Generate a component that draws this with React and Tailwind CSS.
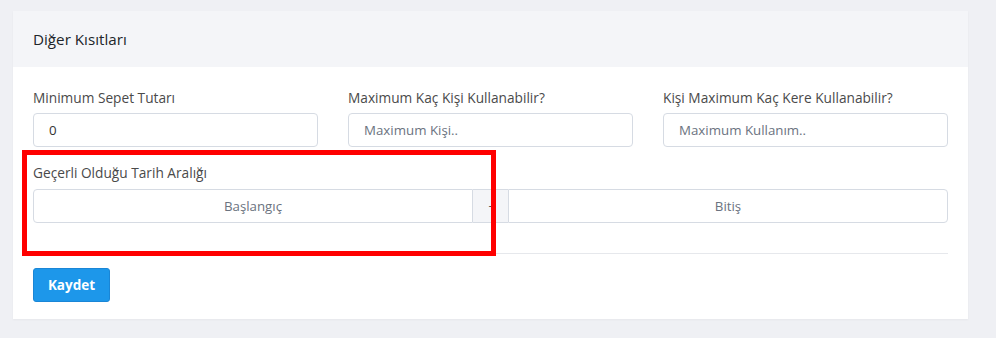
export default function App() {
  const font = { fontFamily: '"Open Sans", "Noto Sans", sans-serif' };
  return (
    <div className="min-h-[338px] bg-[#eff0f4] pl-[13px] pr-[28px] pt-[11px] pb-[19px]" style={font}>
      <div className="bg-white shadow-[0_1px_2px_rgba(0,0,0,0.04)]">
        <div className="flex h-[56px] items-center bg-[#f4f5f8] px-[20px]">
          <h2 className="text-[15.2px] text-[#212529]">Diğer Kısıtları</h2>
        </div>
        <div className="px-[20px] pt-[21px] pb-[17px]">
          <div className="grid grid-cols-3 gap-[30px]">
            <div>
              <label className="block text-[13.7px] leading-[20px] text-[#4a4a4a]">Minimum Sepet Tutarı</label>
              <input
                className="mt-[5px] h-[34px] w-full rounded-[4px] border border-[#d6dbe3] px-[15px] text-[13.3px] text-[#333] outline-none"
                defaultValue="0"
              />
            </div>
            <div>
              <label className="block text-[13.7px] leading-[20px] text-[#4a4a4a]">Maximum Kaç Kişi Kullanabilir?</label>
              <input
                className="mt-[5px] h-[34px] w-full rounded-[4px] border border-[#d6dbe3] px-[15px] text-[13.3px] text-[#333] outline-none placeholder:text-[#6b7380]"
                placeholder="Maximum Kişi.."
              />
            </div>
            <div>
              <label className="block text-[13.7px] leading-[20px] text-[#4a4a4a]">Kişi Maximum Kaç Kere Kullanabilir?</label>
              <input
                className="mt-[5px] h-[34px] w-full rounded-[4px] border border-[#d6dbe3] px-[15px] text-[13.3px] text-[#333] outline-none placeholder:text-[#6b7380]"
                placeholder="Maximum Kullanım.."
              />
            </div>
          </div>

          <div className="relative mt-[16px] pb-[30px]">
            <div className="pointer-events-none absolute left-[-11px] top-[-13px] h-[106px] w-[474px] border-[5px] border-[#ff0000]" />
            <label className="block text-[13.7px] leading-[20px] text-[#4a4a4a]">Geçerli Olduğu Tarih Aralığı</label>
            <div className="mt-[6px] flex h-[34px]">
              <input
                className="h-full flex-1 rounded-l-[4px] border border-[#d6dbe3] text-center text-[13.3px] outline-none placeholder:text-[#6b7380]"
                placeholder="Başlangıç"
              />
              <div className="flex h-full w-[35px] items-center justify-center border-y border-[#d6dbe3] bg-[#f4f5f8] text-[13px] text-[#555]">
                -
              </div>
              <input
                className="h-full flex-1 rounded-r-[4px] border border-[#d6dbe3] text-center text-[13.3px] outline-none placeholder:text-[#6b7380]"
                placeholder="Bitiş"
              />
            </div>
          </div>

          <div className="border-t border-[#e6e8ec] pt-[14px]">
            <button className="h-[34px] w-[77px] rounded-[3px] border border-[#1a86d6] bg-[#1d97ea] text-[13.5px] font-bold text-white">
              Kaydet
            </button>
          </div>
        </div>
      </div>
    </div>
  );
}
